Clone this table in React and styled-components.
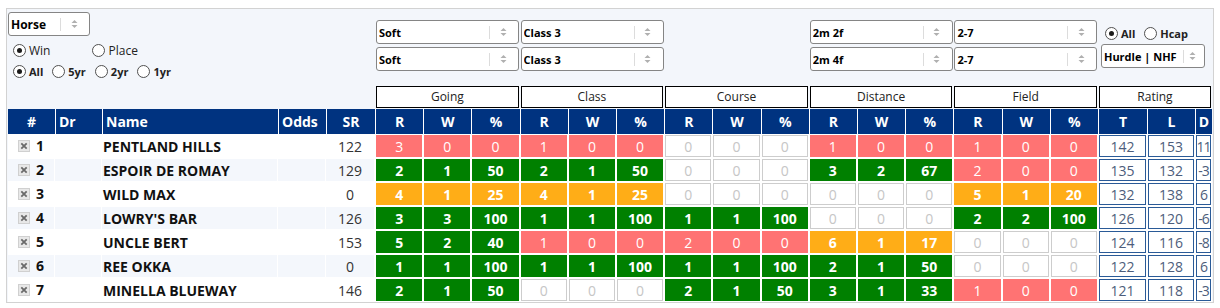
import React from 'react';
import styled, { createGlobalStyle } from 'styled-components';

const GlobalStyle = createGlobalStyle`
  body {
    margin: 0;
    background: #fff;
    font-family: "Open Sans", "Liberation Sans", sans-serif;
  }
`;

const Panel = styled.div`
  margin: 8px 0 0 6px;
  width: 1208px;
  box-sizing: border-box;
  border: 1px solid #d2d2d2;
  padding: 0 1px;
  background: #f3f6fb;
`;

const TopBar = styled.div`
  display: grid;
  grid-template-columns: 367px repeat(5, 144.6px) 1fr;
  height: 77px;
`;

const LeftControls = styled.div`
  display: flex;
  flex-direction: column;
  padding-top: 3px;
`;

const FilterPair = styled.div`
  display: flex;
  flex-direction: column;
  gap: 3px;
  padding: 11px 0 0 1px;
`;

const RatingControls = styled.div`
  display: flex;
  flex-direction: column;
  padding: 15px 0 0 3px;
`;

const RadioRow = styled.div`
  display: flex;
  align-items: center;
  height: 18px;
  gap: ${(p) => p.$gap}px;
  margin: ${(p) => p.$margin || '0'};
  padding-left: ${(p) => p.$indent || 0}px;
`;

const RadioLabel = styled.label`
  display: inline-flex;
  align-items: center;
  gap: 3px;
  font-size: ${(p) => (p.$bold ? 11 : 12)}px;
  font-weight: ${(p) => (p.$bold ? 700 : 400)};
  color: #222;
  white-space: nowrap;
`;

const RadioDot = styled.span`
  width: 13px;
  height: 13px;
  box-sizing: border-box;
  border-radius: 50%;
  border: 1px solid #505050;
  background: #fff;
  display: inline-flex;
  align-items: center;
  justify-content: center;

  &::after {
    content: '';
    width: 5px;
    height: 5px;
    border-radius: 50%;
    background: #1a1a1a;
    display: ${(p) => (p.$checked ? 'block' : 'none')};
  }
`;

const SelectBox = styled.div`
  display: flex;
  align-items: center;
  width: ${(p) => p.$width}px;
  height: 24px;
  box-sizing: border-box;
  border: 1px solid #858585;
  border-radius: 3px;
  background: #fff;
  padding: 0 2px;
  font-size: ${(p) => p.$size || 11}px;
  font-weight: 700;
  color: #000;
`;

const SelectLabel = styled.span`
  flex: 1;
  white-space: nowrap;
  overflow: hidden;
`;

const SelectDivider = styled.span`
  width: 1px;
  height: 13px;
  background: #dcdcdc;
`;

const SelectCaret = styled.span`
  width: ${(p) => (p.$tight ? 18 : 26)}px;
  display: flex;
  justify-content: center;
`;

const Table = styled.table`
  width: 1204px;
  table-layout: fixed;
  border-collapse: separate;
  border-spacing: 0;
`;

const GroupTh = styled.th`
  padding: 0 1px 1px;
  font-weight: 400;
`;

const GroupBox = styled.div`
  height: 22px;
  box-sizing: border-box;
  border: 1px solid #000;
  background: #fff;
  font-size: 12px;
  line-height: 20px;
  color: #222;
  text-align: center;
`;

const HeadCell = styled.th`
  height: 25px;
  padding: 0 ${(p) => (p.$align === 'left' ? '3px' : '0')};
  background: #003380;
  color: #fff;
  font-size: 14px;
  font-weight: 700;
  text-align: ${(p) => p.$align || 'center'};
  border-left: ${(p) => (p.$first ? '0' : '1px solid #fff')};
  white-space: nowrap;
  overflow: hidden;
`;

const Row = styled.tr`
  background: ${(p) => (p.$shade ? '#f4f7fc' : '#fff')};
`;

const InfoCell = styled.td`
  height: 22px;
  padding: 0 ${(p) => (p.$align === 'left' ? '1px' : '0')};
  border-top: 1px solid #fff;
  border-bottom: 1px solid #fff;
  border-right: 1px solid #fff;
  text-align: ${(p) => p.$align || 'center'};
  font-size: 14px;
  font-weight: ${(p) => (p.$bold ? 700 : 400)};
  color: ${(p) => (p.$bold ? '#111' : '#333')};
  white-space: nowrap;
`;

const NumberWrap = styled.span`
  display: inline-flex;
  align-items: center;
  gap: 6px;
`;

const tones = {
  r: { bg: '#ff7373', color: '#fff', weight: 400, ring: 'transparent' },
  g: { bg: '#008000', color: '#fff', weight: 700, ring: 'transparent' },
  o: { bg: '#ffad17', color: '#fff', weight: 700, ring: 'transparent' },
  e: { bg: '#fff', color: '#c6c6c6', weight: 400, ring: '#cdcdcd' },
};

const StatCell = styled.td`
  height: 22px;
  padding: 0;
  border: 1px solid #fff;
  background: ${(p) => tones[p.$tone].bg};
  box-shadow: inset 0 0 0 1px ${(p) => tones[p.$tone].ring};
  color: ${(p) => tones[p.$tone].color};
  font-weight: ${(p) => tones[p.$tone].weight};
  font-size: 14px;
  text-align: center;
`;

const RatingCell = styled.td`
  height: 22px;
  padding: 0;
  border: 1px solid #fff;
  background: #fff;
  box-shadow: inset 0 0 0 1px #2a5a97;
  color: #4d5d7b;
  font-size: 14px;
  text-align: center;
  white-space: nowrap;
  letter-spacing: ${(p) => (p.$narrow ? '-1px' : '0')};
`;

const Caret = () => (
  <svg width="7" height="10" viewBox="0 0 7 10">
    <path d="M0.5 4 L3.5 1 L6.5 4 Z" fill="#b0b0b0" />
    <path d="M0.5 6 L3.5 9 L6.5 6 Z" fill="#b0b0b0" />
  </svg>
);

const RemoveIcon = () => (
  <svg width="12" height="12" viewBox="0 0 12 12">
    <rect x="0.5" y="0.5" width="11" height="11" fill="#e8e8e8" stroke="#d0d0d0" />
    <path d="M3.3 3.3 L8.7 8.7 M8.7 3.3 L3.3 8.7" stroke="#6a6a6a" strokeWidth="1.8" />
  </svg>
);

const Select = ({ value, width, size, tight }) => (
  <SelectBox $width={width} $size={size}>
    <SelectLabel>{value}</SelectLabel>
    <SelectDivider />
    <SelectCaret $tight={tight}>
      <Caret />
    </SelectCaret>
  </SelectBox>
);

const Radio = ({ label, checked, bold }) => (
  <RadioLabel $bold={bold}>
    <RadioDot $checked={checked} />
    {label}
  </RadioLabel>
);

const groups = ['Going', 'Class', 'Course', 'Distance', 'Field'];

const runners = [
  { no: 1, name: 'PENTLAND HILLS', sr: 122, stats: [['r', 3, 0, 0], ['r', 1, 0, 0], ['e', 0, 0, 0], ['r', 1, 0, 0], ['r', 1, 0, 0]], rating: [142, 153, 11] },
  { no: 2, name: 'ESPOIR DE ROMAY', sr: 129, stats: [['g', 2, 1, 50], ['g', 2, 1, 50], ['e', 0, 0, 0], ['g', 3, 2, 67], ['r', 2, 0, 0]], rating: [135, 132, -3] },
  { no: 3, name: 'WILD MAX', sr: 0, stats: [['o', 4, 1, 25], ['o', 4, 1, 25], ['e', 0, 0, 0], ['e', 0, 0, 0], ['o', 5, 1, 20]], rating: [132, 138, 6] },
  { no: 4, name: "LOWRY'S BAR", sr: 126, stats: [['g', 3, 3, 100], ['g', 1, 1, 100], ['g', 1, 1, 100], ['e', 0, 0, 0], ['g', 2, 2, 100]], rating: [126, 120, -6] },
  { no: 5, name: 'UNCLE BERT', sr: 153, stats: [['g', 5, 2, 40], ['r', 1, 0, 0], ['r', 2, 0, 0], ['o', 6, 1, 17], ['e', 0, 0, 0]], rating: [124, 116, -8] },
  { no: 6, name: 'REE OKKA', sr: 0, stats: [['g', 1, 1, 100], ['g', 1, 1, 100], ['g', 1, 1, 100], ['g', 2, 1, 50], ['e', 0, 0, 0]], rating: [122, 128, 6] },
  { no: 7, name: 'MINELLA BLUEWAY', sr: 146, stats: [['g', 2, 1, 50], ['e', 0, 0, 0], ['g', 2, 1, 50], ['g', 3, 1, 33], ['r', 1, 0, 0]], rating: [121, 118, -3] },
];

const filters = [
  ['Soft', 'Soft'],
  ['Class 3', 'Class 3'],
  null,
  ['2m 2f', '2m 4f'],
  ['2-7', '2-7'],
];

const App = () => (
  <>
    <GlobalStyle />
    <Panel>
      <TopBar>
        <LeftControls>
          <Select value="Horse" width={82} size={12} />
          <RadioRow $gap={42} $margin="5px 0 0" $indent={5}>
            <Radio label="Win" checked />
            <Radio label="Place" />
          </RadioRow>
          <RadioRow $gap={9} $margin="3px 0 0" $indent={5}>
            <Radio label="All" checked bold />
            <Radio label="5yr" bold />
            <Radio label="2yr" bold />
            <Radio label="1yr" bold />
          </RadioRow>
        </LeftControls>
        {filters.map((pair, i) => (
          <FilterPair key={i}>
            {pair && pair.map((v, j) => <Select key={j} value={v} width={143} />)}
          </FilterPair>
        ))}
        <RatingControls>
          <RadioRow $gap={9} $indent={4}>
            <Radio label="All" checked bold />
            <Radio label="Hcap" bold />
          </RadioRow>
          <RadioRow $gap={0} $margin="5px 0 0">
            <Select value="Hurdle | NHF" width={104} tight />
          </RadioRow>
        </RatingControls>
      </TopBar>

      <Table>
        <colgroup>
          <col style={{ width: 47 }} />
          <col style={{ width: 47 }} />
          <col style={{ width: 176 }} />
          <col style={{ width: 48 }} />
          <col style={{ width: 49 }} />
          {Array.from({ length: 15 }).map((_, i) => (
            <col key={i} style={{ width: 48.2 }} />
          ))}
          <col style={{ width: 49 }} />
          <col style={{ width: 48 }} />
          <col />
        </colgroup>
        <thead>
          <tr>
            <th colSpan={5} />
            {groups.map((g) => (
              <GroupTh key={g} colSpan={3}>
                <GroupBox>{g}</GroupBox>
              </GroupTh>
            ))}
            <GroupTh colSpan={3}>
              <GroupBox>Rating</GroupBox>
            </GroupTh>
          </tr>
          <tr>
            <HeadCell $first>#</HeadCell>
            <HeadCell $align="left">Dr</HeadCell>
            <HeadCell $align="left">Name</HeadCell>
            <HeadCell $align="left">Odds</HeadCell>
            <HeadCell>SR</HeadCell>
            {groups.map((g) =>
              ['R', 'W', '%'].map((h) => <HeadCell key={g + h}>{h}</HeadCell>)
            )}
            <HeadCell>T</HeadCell>
            <HeadCell>L</HeadCell>
            <HeadCell>D</HeadCell>
          </tr>
        </thead>
        <tbody>
          {runners.map((r, i) => (
            <Row key={r.no} $shade={i % 2 === 1}>
              <InfoCell $bold>
                <NumberWrap>
                  <RemoveIcon />
                  {r.no}
                </NumberWrap>
              </InfoCell>
              <InfoCell />
              <InfoCell $bold $align="left">{r.name}</InfoCell>
              <InfoCell />
              <InfoCell>{r.sr}</InfoCell>
              {r.stats.map(([tone, ...vals], gi) =>
                vals.map((v, vi) => (
                  <StatCell key={`${gi}-${vi}`} $tone={tone}>{v}</StatCell>
                ))
              )}
              <RatingCell>{r.rating[0]}</RatingCell>
              <RatingCell>{r.rating[1]}</RatingCell>
              <RatingCell $narrow>{r.rating[2]}</RatingCell>
            </Row>
          ))}
        </tbody>
      </Table>
    </Panel>
  </>
);

export default App;
